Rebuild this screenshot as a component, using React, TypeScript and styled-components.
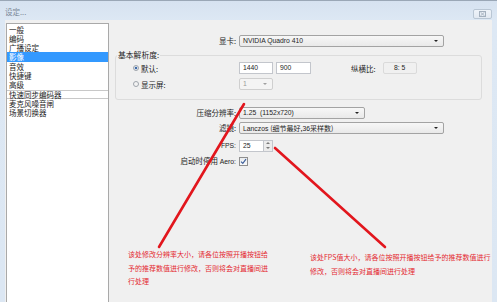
import React from "react";
import styled, { createGlobalStyle } from "styled-components";

const GlobalStyle = createGlobalStyle`
  html, body { margin: 0; padding: 0; }
  body {
    width: 497px; height: 302px; overflow: hidden;
    font-family: "Noto Sans CJK SC", "Noto Sans", sans-serif;
    color: #1e1e1e;
  }
  * { box-sizing: border-box; }
`;

const Window = styled.div`
  position: relative;
  width: 497px;
  height: 302px;
  display: flex;
  flex-direction: column;
  background: linear-gradient(180deg, #d6e2f0 0px, #dde8f4 20px, #dce7f3 100%);
  border-top: 1px solid #9aa7b6;
  overflow: hidden;
`;

const TitleBar = styled.div`
  height: 19px;
  display: flex;
  align-items: center;
  padding: 0 5px 0 5px;
`;

const Title = styled.span`
  font-size: 7.5px;
  color: #7a8796;
  margin-top: 2px;
`;

const CloseButton = styled.div`
  margin-left: auto;
  margin-top: 6px;
  width: 19px;
  height: 10px;
  border: 1px solid #b9c6d4;
  border-radius: 2px;
  background: linear-gradient(#eef3f9, #e2e9f2);
  display: flex;
  align-items: center;
  justify-content: center;
`;

const Body = styled.div`
  flex: 1;
  margin: 0 5px;
  background: #f0f0f0;
  display: flex;
  padding: 3px 0 0 1px;
  min-height: 0;
`;

const List = styled.div`
  width: 103px;
  background: #fff;
  border: 1px solid #a9a9a9;
  border-bottom: none;
  padding-top: 0.5px;
  display: flex;
  flex-direction: column;
`;

const ListItem = styled.div<{ $selected?: boolean; $boxed?: boolean }>`
  height: 9.3px;
  line-height: 9.3px;
  font-size: 7.5px;
  padding-left: 2px;
  white-space: nowrap;
  background: ${(p) => (p.$selected ? "#3399ff" : "transparent")};
  color: ${(p) => (p.$selected ? "#fff" : "#1e1e1e")};
  ${(p) =>
    p.$boxed
      ? "box-shadow: inset 0 1px 0 #c8c8c8, inset 0 -1px 0 #c8c8c8;"
      : ""}
`;

const Main = styled.div`
  flex: 1;
  display: flex;
  flex-direction: column;
  padding-top: 12px;
`;

const FormRow = styled.div<{ $mt?: number }>`
  display: grid;
  grid-template-columns: 127px auto;
  column-gap: 3px;
  align-items: center;
  height: 12px;
  margin-top: ${(p) => p.$mt ?? 0}px;
`;

const Label = styled.span`
  font-size: 7.5px;
  text-align: right;
  white-space: nowrap;
  line-height: 12px;
`;

const Latin = styled.span`
  font-family: "Liberation Sans", Arial, sans-serif;
  font-size: 6.8px;
`;

const Combo = styled.div<{ $w: number; $disabled?: boolean }>`
  position: relative;
  width: ${(p) => p.$w}px;
  height: 12px;
  border: 1px solid ${(p) => (p.$disabled ? "#cfcfcf" : "#a3a3a3")};
  border-radius: 2px;
  background: ${(p) =>
    p.$disabled ? "#f4f4f4" : "linear-gradient(#f7f7f7, #e9e9e9)"};
  color: ${(p) => (p.$disabled ? "#9a9a9a" : "#1e1e1e")};
  font-family: "Liberation Sans", Arial, sans-serif;
  font-size: 6.8px;
  line-height: 10px;
  padding-left: 3px;
  white-space: nowrap;
  &::after {
    content: "";
    position: absolute;
    right: 5px;
    top: 4px;
    border-left: 2px solid transparent;
    border-right: 2px solid transparent;
    border-top: 2px solid ${(p) => (p.$disabled ? "#a0a0a0" : "#222")};
  }
`;

const CjkInCombo = styled.span`
  font-family: "Noto Sans CJK SC", sans-serif;
  font-size: 7px;
`;

const TextBox = styled.div<{ $w: number }>`
  width: ${(p) => p.$w}px;
  height: 12px;
  border: 1px solid #c3c6cc;
  background: #fff;
  font-family: "Liberation Sans", Arial, sans-serif;
  font-size: 6.8px;
  line-height: 10px;
  padding-left: 3px;
`;

const ReadOnlyBox = styled.div`
  width: 34px;
  height: 12px;
  border: 1px solid #dadada;
  border-radius: 2px;
  background: #f0f0f0;
  font-family: "Liberation Sans", Arial, sans-serif;
  font-size: 6.8px;
  line-height: 10px;
  text-align: center;
  margin-left: 7px;
`;

const Group = styled.fieldset`
  margin: 3px 0 0 6px;
  width: 367px;
  padding: 0 0 9px 0;
  border: 1px solid #dcdcdc;
  border-radius: 3px;
`;

const Legend = styled.legend`
  font-size: 7.8px;
  line-height: 10px;
  padding: 0 1px;
  margin-left: 1px;
  white-space: nowrap;
`;

const RadioRow = styled.div<{ $mt: number }>`
  display: flex;
  align-items: center;
  height: 12px;
  margin-top: ${(p) => p.$mt}px;
  padding-left: 17px;
`;

const RadioLabel = styled.div`
  width: 106px;
  display: flex;
  align-items: center;
  gap: 2px;
  font-size: 7.5px;
  white-space: nowrap;
`;

const Radio = styled.span<{ $on?: boolean }>`
  width: 6px;
  height: 6px;
  border-radius: 50%;
  border: 1px solid #9ea4ab;
  background: ${(p) =>
    p.$on ? "radial-gradient(circle, #3e6aa8 0 1.4px, #e8edf3 1.6px)" : "#f3f3f3"};
`;

const Gap = styled.span<{ $w: number }>`
  display: inline-block;
  width: ${(p) => p.$w}px;
`;

const AspectLabel = styled.span`
  font-size: 7.5px;
  margin-left: 40px;
  white-space: nowrap;
`;

const Spin = styled.div`
  display: flex;
  height: 12px;
`;

const SpinInput = styled.div`
  width: 24px;
  height: 12px;
  border: 1px solid #c3c6cc;
  border-right: none;
  background: #fff;
  font-family: "Liberation Sans", Arial, sans-serif;
  font-size: 6.8px;
  line-height: 10px;
  padding-left: 3px;
`;

const SpinButtons = styled.div`
  width: 10px;
  height: 12px;
  border: 1px solid #c3c6cc;
  background: #ececec;
  display: flex;
  flex-direction: column;
  align-items: center;
  justify-content: space-around;
`;

const Check = styled.div`
  width: 9px;
  height: 9px;
  border: 1px solid #8f8f8f;
  background: linear-gradient(#e9ecef, #fafafa);
  display: flex;
  align-items: center;
  justify-content: center;
`;

const Overlay = styled.svg`
  position: absolute;
  left: 0;
  top: 0;
  pointer-events: none;
`;

const Note = styled.div<{ $x: number; $y: number }>`
  position: absolute;
  left: ${(p) => p.$x}px;
  top: ${(p) => p.$y}px;
  color: #e42a30;
  font-size: 7px;
  line-height: 13.7px;
  white-space: nowrap;
`;

const Arrow = ({ up }: { up?: boolean }) => (
  <svg width="4" height="2" viewBox="0 0 4 2">
    <path d={up ? "M0 2 L2 0 L4 2Z" : "M0 0 L2 2 L4 0Z"} fill="#7a7a7a" />
  </svg>
);

export default function App() {
  return (
    <>
      <GlobalStyle />
      <Window>
        <TitleBar>
          <Title>设定...</Title>
          <CloseButton>
            <svg width="7" height="6" viewBox="0 0 7 6">
              <rect x="0.5" y="0.5" width="6" height="5" fill="none" stroke="#a4b0be" />
              <path d="M1.5 1.2 L5.5 4.8 M5.5 1.2 L1.5 4.8" stroke="#a4b0be" strokeWidth="0.9" />
            </svg>
          </CloseButton>
        </TitleBar>
        <Body>
          <List>
            <ListItem>一般</ListItem>
            <ListItem>编码</ListItem>
            <ListItem>广播设定</ListItem>
            <ListItem $selected>影像</ListItem>
            <ListItem>音效</ListItem>
            <ListItem>快捷键</ListItem>
            <ListItem>高级</ListItem>
            <ListItem $boxed>快速同步编码器</ListItem>
            <ListItem>麦克风噪音闸</ListItem>
            <ListItem>场景切换器</ListItem>
          </List>
          <Main>
            <FormRow>
              <Label>显卡:</Label>
              <Combo $w={205}>NVIDIA Quadro 410</Combo>
            </FormRow>
            <Group>
              <Legend>基本解析度:</Legend>
              <RadioRow $mt={2}>
                <RadioLabel>
                  <Radio $on />
                  默认:
                </RadioLabel>
                <TextBox $w={34}>1440</TextBox>
                <Gap $w={3} />
                <TextBox $w={35}>900</TextBox>
                <AspectLabel>纵横比:</AspectLabel>
                <ReadOnlyBox>8: 5</ReadOnlyBox>
              </RadioRow>
              <RadioRow $mt={4}>
                <RadioLabel>
                  <Radio />
                  显示屏:
                </RadioLabel>
                <Combo $w={34} $disabled>
                  1
                </Combo>
              </RadioRow>
            </Group>
            <FormRow $mt={7}>
              <Label>压缩分辨率:</Label>
              <Combo $w={126}>1.25 &nbsp;(1152x720)</Combo>
            </FormRow>
            <FormRow $mt={3}>
              <Label>滤镜:</Label>
              <Combo $w={205}>
                Lanczos <CjkInCombo>(细节最好,</CjkInCombo>36<CjkInCombo>采样数)</CjkInCombo>
              </Combo>
            </FormRow>
            <FormRow $mt={5}>
              <Label>
                <Latin>FPS:</Latin>
              </Label>
              <Spin>
                <SpinInput>25</SpinInput>
                <SpinButtons>
                  <Arrow up />
                  <Arrow />
                </SpinButtons>
              </Spin>
            </FormRow>
            <FormRow $mt={4}>
              <Label>
                启动时停用 <Latin>Aero:</Latin>
              </Label>
              <Check>
                <svg width="7" height="7" viewBox="0 0 7 7">
                  <path d="M1 3.6 L2.8 5.4 L6 1.2" fill="none" stroke="#3b5d9a" strokeWidth="1.1" />
                </svg>
              </Check>
            </FormRow>
          </Main>
        </Body>
        <Overlay width="497" height="302" viewBox="0 0 497 302">
          <line x1="244" y1="103" x2="159" y2="246" stroke="#e2161d" strokeWidth="2.6" strokeLinecap="round" />
          <line x1="275" y1="147" x2="385" y2="246" stroke="#e2161d" strokeWidth="2.6" strokeLinecap="round" />
        </Overlay>
        <Note $x={128} $y={247}>
          该处修改分辨率大小，请各位按照开播按钮给
          <br />
          予的推荐数值进行修改，否则将会对直播间进
          <br />
          行处理
        </Note>
        <Note $x={310} $y={250}>
          该处FPS值大小，请各位按照开播按钮给予的推荐数值进行
          <br />
          修改，否则将会对直播间进行处理
        </Note>
      </Window>
    </>
  );
}
